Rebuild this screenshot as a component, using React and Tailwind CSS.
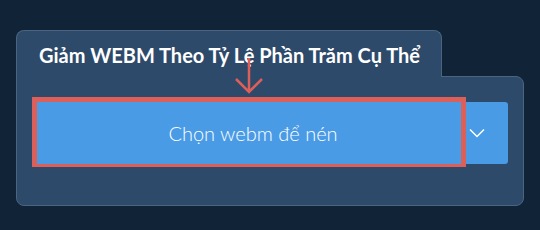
import React from "react";

function ChevronDown() {
  return (
    <svg width="16" height="10" viewBox="0 0 16 10" fill="none">
      <path d="M1 1.5 L8 8.5 L15 1.5" stroke="white" strokeWidth="1.5" />
    </svg>
  );
}

export default function App() {
  return (
    <div
      className="relative w-[540px] h-[230px] bg-[#112337] pt-[30px] pl-[16px]"
      style={{ fontFamily: "Lato, 'Noto Sans', sans-serif" }}
    >
      {/* Tab */}
      <div className="relative z-10 -mb-px w-[426px] h-[47px] bg-[#2d4a6a] border border-b-0 border-[#4b6482] rounded-t-[8px] pl-[22px] pt-[12px]">
        <h2 className="text-[20px] font-bold text-white leading-[24px]">
          Giảm WEBM Theo Tỷ Lệ Phần Trăm Cụ Thể
        </h2>
      </div>

      {/* Body */}
      <div className="w-[508px] h-[130px] bg-[#2d4a6a] border border-[#4b6482] rounded-b-[8px] rounded-tr-[8px] pl-[16px] pt-[25px]">
        <div className="flex h-[62px] w-[475px]">
          <button className="flex-1 bg-[#4a9be6] rounded-l-[3px] pl-[10px] text-white text-[20px] font-light">
            Chọn webm để nén
          </button>
          <div className="w-[3px] bg-[#4a9be6]" />
          <button className="w-[42px] flex items-center justify-start pl-[3px] bg-[#4a9be6] rounded-r-[3px]">
            <ChevronDown />
          </button>
        </div>
      </div>

      {/* Annotation */}
      <div className="absolute z-20 left-[32px] top-[97px] w-[434px] h-[70px] border-[5px] border-b-[3px] border-[#dd5f5a] pointer-events-none" />
      <svg className="absolute z-20 left-[234px] top-[58px]" width="30" height="36" viewBox="0 0 30 36" fill="none">
        <path d="M15 0 V34 M2 21 L15 34 L28 21" stroke="#dd5f5a" strokeWidth="2.5" />
      </svg>
    </div>
  );
}
